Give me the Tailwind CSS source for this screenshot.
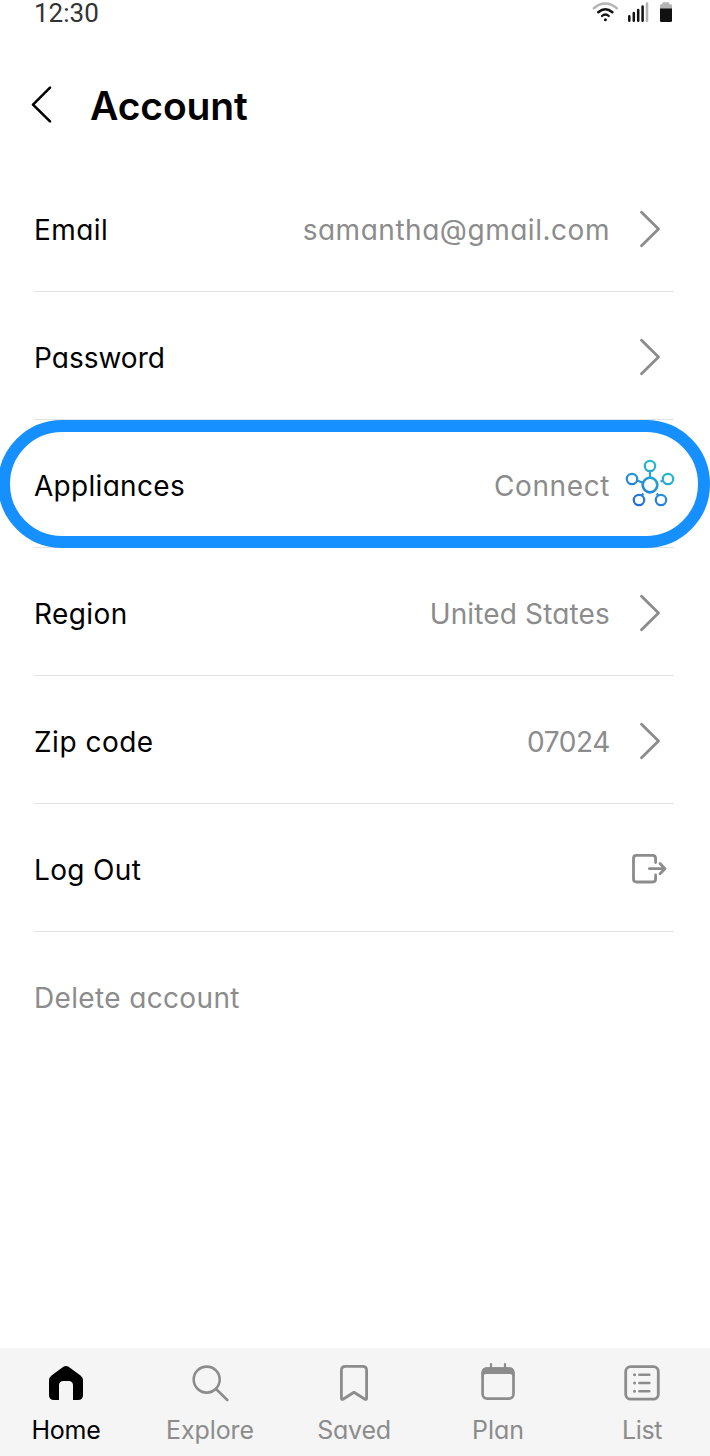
<!DOCTYPE html>
<html lang="en">
<head>
<meta charset="utf-8">
<title>Account</title>
<script src="https://cdn.jsdelivr.net/npm/@tailwindcss/browser@4"></script>
</head>
<body class="bg-white">
<div class="relative flex h-[1456px] w-[710px] flex-col overflow-hidden bg-white font-['Inter',sans-serif] text-black [font-feature-settings:'cv11']">
  <header class="flex h-[28px] items-start justify-between pl-[34px] pr-[36px]">
    <span class="font-['Roboto',sans-serif] text-[26px] leading-[26px] text-[#333]">12:30</span>
    <svg class="h-[28px] w-[84px]" viewBox="590 0 84 28" fill="none" stroke-linecap="round">
      <path d="M593.8 8.2Q605.2-1.2 616.8 8.2" stroke="#b5b5b5" stroke-width="2.4"/>
      <path d="M598.3 12.3Q605.3 6.3 612.4 12.3" stroke="#111" stroke-width="2.5"/>
      <path d="M602 16Q605.4 13 608.8 16" stroke="#111" stroke-width="2.2"/>
      <circle cx="605.4" cy="19.8" r="1.5" fill="#111"/>
      <path d="M629.3 16.3V20.7M633.8 13V20.7M638.2 10V20.7M642.6 6.5V20.7" stroke="#111" stroke-width="2.5"/>
      <path d="M647 3.5V20.7" stroke="#b5b5b5" stroke-width="2.5"/>
      <path d="M660 9V5.5Q660 4.2 661.3 4.2H662.3V3.2Q662.3 2.2 663.3 2.2H668.3Q669.3 2.2 669.3 3.2V4.2H670.7Q672 4.2 672 5.5V9Z" fill="#b5b5b5"/>
      <path d="M660 8.5H672V20.7Q672 22 670.7 22H661.3Q660 22 660 20.7Z" fill="#111"/>
    </svg>
  </header>
  <div class="flex h-[136px] items-start pl-[30px] pt-[56px]">
    <svg class="mt-0 h-[42px] w-[24px]" viewBox="30 84 24 42" fill="none" stroke="#000" stroke-width="2.6" stroke-linecap="round" stroke-linejoin="round"><path d="M50 87.6L33 104.6L50 121.4"/></svg>
    <h1 class="ml-[36px] text-[39px] font-semibold leading-[44px] tracking-[-0.1px]">Account</h1>
  </div>
  <main class="flex grow flex-col pl-[34px] pr-[36px] text-[28px] leading-[34px]">
    <div class="flex h-[128px] items-center border-b border-[#e2e2e2]">
      <span class="mt-1 grow tracking-[0.4px]">Email</span><span class="mt-1 tracking-[0.53px] text-[#8c8c8c]">samantha@gmail.com</span>
      <svg class="ml-[27px] mr-[12px] h-[40px] w-[25px]" viewBox="0 0 25 40" fill="none" stroke="#8c8c8c" stroke-width="2.8" stroke-linecap="round" stroke-linejoin="round"><path d="M4.5 4.3L21.5 21L4.5 37.7"/></svg>
    </div>
    <div class="flex h-[128px] items-center border-b border-[#e2e2e2]">
      <span class="mt-1 grow">Password</span>
      <svg class="ml-[28px] mr-[12px] h-[40px] w-[25px]" viewBox="0 0 25 40" fill="none" stroke="#8c8c8c" stroke-width="2.8" stroke-linecap="round" stroke-linejoin="round"><path d="M4.5 4.3L21.5 21L4.5 37.7"/></svg>
    </div>
    <div class="relative flex h-[128px] items-center border-b border-[#e2e2e2]">
      <span class="mt-1 grow tracking-[0.3px]">Appliances</span><span class="mt-1 tracking-[0.6px] text-[#8c8c8c]">Connect</span>
      <svg class="ml-[14px] mr-[-2px] h-[52px] w-[52px]" viewBox="624 458 52 52" fill="none" stroke="url(#hub)" stroke-width="2.2">
        <defs><linearGradient id="hub" gradientUnits="userSpaceOnUse" x1="662" y1="466" x2="636" y2="506"><stop stop-color="#27bdd0"/><stop offset="1" stop-color="#2467df"/></linearGradient></defs>
        <circle cx="650" cy="485" r="7.3" stroke-width="2.7"/>
        <circle cx="650" cy="466" r="5.2"/><circle cx="632" cy="479" r="5.2"/><circle cx="668" cy="479" r="5.2"/><circle cx="639" cy="500" r="5.2"/><circle cx="661" cy="500" r="5.2"/>
        <path d="M649.95 471L650.05 478M637 480.5L643 482.7M660.5 481.5L663 480.7M641.7 495.7L643.3 493.5M658.3 495.7L656.7 493.5"/>
      </svg>
      <div class="absolute left-[-36px] top-0 h-[128px] w-[712px] rounded-full border-[12px] border-[#168fff]"></div>
    </div>
    <div class="flex h-[128px] items-center border-b border-[#e2e2e2]">
      <span class="mt-1 grow tracking-[0.4px]">Region</span><span class="mt-1 tracking-[0.15px] text-[#8c8c8c]">United States</span>
      <svg class="ml-[27px] mr-[12px] h-[40px] w-[25px]" viewBox="0 0 25 40" fill="none" stroke="#8c8c8c" stroke-width="2.8" stroke-linecap="round" stroke-linejoin="round"><path d="M4.5 4.3L21.5 21L4.5 37.7"/></svg>
    </div>
    <div class="flex h-[128px] items-center border-b border-[#e2e2e2]">
      <span class="mt-1 grow tracking-[0.5px]">Zip code</span><span class="mt-1 tracking-[-0.4px] text-[#8c8c8c]">07024</span>
      <svg class="ml-[27px] mr-[12px] h-[40px] w-[25px]" viewBox="0 0 25 40" fill="none" stroke="#8c8c8c" stroke-width="2.8" stroke-linecap="round" stroke-linejoin="round"><path d="M4.5 4.3L21.5 21L4.5 37.7"/></svg>
    </div>
    <div class="flex h-[128px] items-center border-b border-[#e2e2e2]">
      <span class="mt-1 grow tracking-[0.35px]">Log Out</span>
      <svg class="mr-[6px] h-[36px] w-[38px]" viewBox="630 850 38 36" fill="none" stroke="#8c8c8c" stroke-width="2.8" stroke-linecap="round" stroke-linejoin="round"><path d="M655.6 862.5V858.4Q655.6 855.4 652.6 855.4H636.5Q633.5 855.4 633.5 858.4V879Q633.5 882 636.5 882H652.6Q655.6 882 655.6 879V875M649.4 868.7H664M660 863.5L665 868.7L660 873.8"/></svg>
    </div>
    <div class="flex h-[128px] items-center"><span class="mt-1 tracking-[0.35px] text-[#8c8c8c]">Delete account</span></div>
  </main>
  <nav class="flex h-[108px] justify-between bg-[#f5f5f5] pl-[6px] pr-[8px] text-[25px] leading-[30px] text-[#8c8c8c]">
    <div class="flex w-[120px] flex-col items-center pt-[11px] text-black">
      <svg class="h-[48px] w-[48px]" viewBox="42 1359 48 48"><path d="M63.4 1366.8Q66 1365 68.6 1366.8L80.5 1375.5Q83 1377.4 83 1380.5V1395Q83 1400 78 1400H73V1385.5Q73 1381 68.5 1381H63.5Q59 1381 59 1385.5V1400H54Q49 1400 49 1395V1380.5Q49 1377.4 51.5 1375.5Z" fill="#000"/></svg>
      <span class="mt-[8px] tracking-[-0.2px]">Home</span>
    </div>
    <div class="flex w-[120px] flex-col items-center pt-[11px]">
      <svg class="h-[48px] w-[48px]" viewBox="186 1359 48 48" fill="none" stroke="#8c8c8c" stroke-width="2.6" stroke-linecap="round"><circle cx="206.7" cy="1379.6" r="13"/><path d="M216.3 1389.2L227.3 1400"/></svg>
      <span class="mt-[8px] tracking-[-0.1px]">Explore</span>
    </div>
    <div class="flex w-[120px] flex-col items-center pt-[11px]">
      <svg class="h-[48px] w-[48px]" viewBox="330 1359 48 48" fill="none" stroke="#8c8c8c" stroke-width="2.8" stroke-linejoin="round"><path d="M341.4 1398V1370.4Q341.4 1366.4 345.4 1366.4H362.6Q366.6 1366.4 366.6 1370.4V1398Q366.6 1400.3 364.6 1399L354 1392.3L343.4 1399Q341.4 1400.3 341.4 1398Z"/></svg>
      <span class="mt-[8px] tracking-[-0.25px]">Saved</span>
    </div>
    <div class="flex w-[120px] flex-col items-center pt-[11px]">
      <svg class="h-[48px] w-[48px]" viewBox="474 1359 48 48" fill="none" stroke="#8c8c8c" stroke-width="2.7"><rect x="482.6" y="1368.6" width="30.9" height="30" rx="4.5"/><path d="M483 1373.8V1372Q483 1368.6 487 1368.6H509Q513 1368.6 513 1372V1373.8Q512 1372.6 509.5 1372.6H486.5Q484 1372.6 483 1373.8Z" fill="#8c8c8c"/><path d="M491 1364V1369M505 1364V1369" stroke-linecap="round" stroke-width="2.2"/></svg>
      <span class="mt-[8px]">Plan</span>
    </div>
    <div class="flex w-[120px] flex-col items-center pt-[11px]">
      <svg class="h-[48px] w-[48px]" viewBox="618 1359 48 48" fill="none" stroke="#8c8c8c" stroke-width="2.8" stroke-linecap="round"><rect x="625.7" y="1366.6" width="32.6" height="32.6" rx="5"/><path d="M639.4 1374.7H649.3M639.4 1383H649.3M639.4 1391.3H649.3" stroke-width="2.6"/><path d="M634.5 1374.7h.01M634.5 1383h.01M634.5 1391.3h.01" stroke-width="3"/></svg>
      <span class="mt-[8px] tracking-[-0.4px]">List</span>
    </div>
  </nav>
</div>
</body>
</html>
